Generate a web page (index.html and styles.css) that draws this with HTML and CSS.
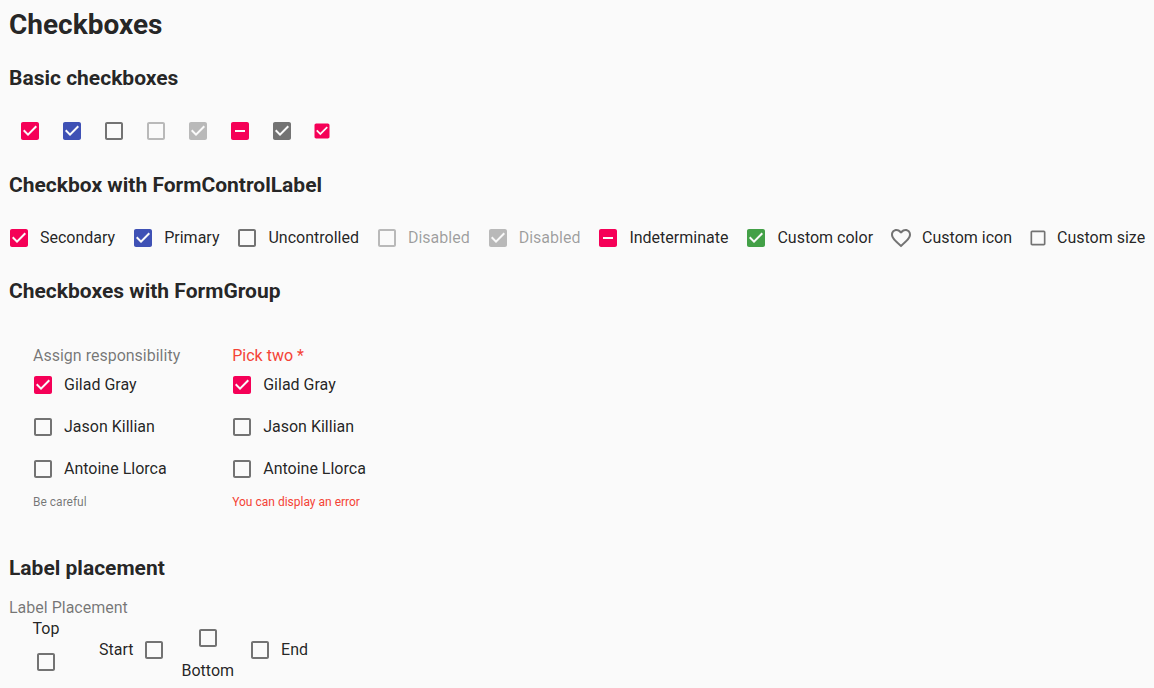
FILE: index.html
```html
<!DOCTYPE html>
<html lang="en">
<head>
<meta charset="utf-8">
<meta name="viewport" content="width=device-width, initial-scale=1">
<title>Checkboxes</title>
<link rel="stylesheet" href="styles.css">
</head>
<body>
<svg class="sprite" aria-hidden="true">
  <symbol id="on" viewBox="0 0 24 24"><path d="M19 3H5c-1.11 0-2 .9-2 2v14c0 1.1.89 2 2 2h14c1.11 0 2-.9 2-2V5c0-1.1-.89-2-2-2zm-9 14l-5-5 1.41-1.41L10 14.17l7.59-7.59L19 8l-9 9z"/></symbol>
  <symbol id="off" viewBox="0 0 24 24"><path d="M19 5v14H5V5h14m0-2H5c-1.1 0-2 .9-2 2v14c0 1.1.9 2 2 2h14c1.1 0 2-.9 2-2V5c0-1.1-.9-2-2-2z"/></symbol>
  <symbol id="mixed" viewBox="0 0 24 24"><path d="M19 3H5c-1.1 0-2 .9-2 2v14c0 1.1.9 2 2 2h14c1.1 0 2-.9 2-2V5c0-1.1-.9-2-2-2zm-2 10H7v-2h10v2z"/></symbol>
  <symbol id="heart" viewBox="0 0 24 24"><path d="M16.5 3c-1.74 0-3.41.81-4.5 2.09C10.91 3.81 9.24 3 7.5 3 4.42 3 2 5.42 2 8.5c0 3.78 3.4 6.86 8.55 11.54L12 21.35l1.45-1.32C18.6 15.36 22 12.28 22 8.5 22 5.42 19.58 3 16.5 3zm-4.4 15.55l-.1.1-.1-.1C7.14 14.24 4 11.39 4 8.5 4 6.5 5.5 5 7.5 5c1.54 0 3.04.99 3.57 2.36h1.87C13.46 5.99 14.96 5 16.5 5c2 0 3.5 1.5 3.5 3.5 0 2.89-3.14 5.74-7.9 10.05z"/></symbol>
</svg>
<main class="page">
  <h1 class="title">Checkboxes</h1>

  <h2 class="heading">Basic checkboxes</h2>
  <div class="basic">
    <span class="check secondary"><input type="checkbox" aria-label="Secondary checkbox" checked><svg><use href="#on"/></svg></span>
    <span class="check primary"><input type="checkbox" aria-label="Primary checkbox" checked><svg><use href="#on"/></svg></span>
    <span class="check"><input type="checkbox" aria-label="Uncontrolled checkbox"><svg><use href="#off"/></svg></span>
    <span class="check disabled"><input type="checkbox" aria-label="Disabled checkbox" disabled><svg><use href="#off"/></svg></span>
    <span class="check disabled"><input type="checkbox" aria-label="Disabled checked checkbox" checked disabled><svg><use href="#on"/></svg></span>
    <span class="check secondary"><input type="checkbox" aria-label="Indeterminate checkbox" checked><svg><use href="#mixed"/></svg></span>
    <span class="check"><input type="checkbox" aria-label="Default color checkbox" checked><svg><use href="#on"/></svg></span>
    <span class="check secondary small"><input type="checkbox" aria-label="Small checkbox" checked><svg><use href="#on"/></svg></span>
  </div>

  <h2 class="heading">Checkbox with FormControlLabel</h2>
  <div class="labelled">
    <label class="field"><span class="check secondary"><input type="checkbox" checked><svg><use href="#on"/></svg></span><span>Secondary</span></label>
    <label class="field"><span class="check primary"><input type="checkbox" checked><svg><use href="#on"/></svg></span><span>Primary</span></label>
    <label class="field"><span class="check"><input type="checkbox"><svg><use href="#off"/></svg></span><span>Uncontrolled</span></label>
    <label class="field muted"><span class="check disabled"><input type="checkbox" disabled><svg><use href="#off"/></svg></span><span>Disabled</span></label>
    <label class="field muted"><span class="check disabled"><input type="checkbox" checked disabled><svg><use href="#on"/></svg></span><span>Disabled</span></label>
    <label class="field"><span class="check secondary"><input type="checkbox" checked><svg><use href="#mixed"/></svg></span><span>Indeterminate</span></label>
    <label class="field"><span class="check green"><input type="checkbox" checked><svg><use href="#on"/></svg></span><span>Custom color</span></label>
    <label class="field"><span class="check"><input type="checkbox"><svg><use href="#heart"/></svg></span><span>Custom icon</span></label>
    <label class="field"><span class="check small"><input type="checkbox"><svg><use href="#off"/></svg></span><span>Custom size</span></label>
  </div>

  <h2 class="heading">Checkboxes with FormGroup</h2>
  <div class="groups">
    <fieldset class="group">
      <legend class="legend">Assign responsibility</legend>
      <div class="options">
        <label class="field"><span class="check secondary"><input type="checkbox" checked><svg><use href="#on"/></svg></span><span>Gilad Gray</span></label>
        <label class="field"><span class="check"><input type="checkbox"><svg><use href="#off"/></svg></span><span>Jason Killian</span></label>
        <label class="field"><span class="check"><input type="checkbox"><svg><use href="#off"/></svg></span><span>Antoine Llorca</span></label>
      </div>
      <p class="helper">Be careful</p>
    </fieldset>
    <fieldset class="group error">
      <legend class="legend">Pick two *</legend>
      <div class="options">
        <label class="field"><span class="check secondary"><input type="checkbox" checked><svg><use href="#on"/></svg></span><span>Gilad Gray</span></label>
        <label class="field"><span class="check"><input type="checkbox"><svg><use href="#off"/></svg></span><span>Jason Killian</span></label>
        <label class="field"><span class="check"><input type="checkbox"><svg><use href="#off"/></svg></span><span>Antoine Llorca</span></label>
      </div>
      <p class="helper">You can display an error</p>
    </fieldset>
  </div>

  <h2 class="heading">Label placement</h2>
  <fieldset class="placement">
    <legend class="legend">Label Placement</legend>
    <div class="places">
      <label class="field top"><span class="check"><input type="checkbox"><svg><use href="#off"/></svg></span><span>Top</span></label>
      <label class="field start"><span class="check"><input type="checkbox"><svg><use href="#off"/></svg></span><span>Start</span></label>
      <label class="field bottom"><span class="check"><input type="checkbox"><svg><use href="#off"/></svg></span><span>Bottom</span></label>
      <label class="field end"><span class="check"><input type="checkbox"><svg><use href="#off"/></svg></span><span>End</span></label>
    </div>
  </fieldset>
</main>
</body>
</html>
```
FILE: styles.css
```css
* { box-sizing: border-box; }

body {
  margin: 0;
  background: #fafafa;
  color: rgba(0, 0, 0, 0.87);
  font: 400 16px/24px Roboto, "Liberation Sans", sans-serif;
}

.sprite { display: none; }

.page { padding: 9px 0 4px 9px; }

.title {
  margin: 0;
  font-size: 28px;
  line-height: 32px;
  font-weight: 700;
}

.heading {
  margin: 20px 0;
  font-size: 21px;
  line-height: 24px;
  font-weight: 700;
}

.title + .heading { margin-top: 25px; }

/* Checkbox control: the native input and its icon share one grid cell */
.check {
  display: inline-grid;
  padding: 9px;
  color: rgba(0, 0, 0, 0.54);
}

.check input,
.check svg {
  grid-area: 1 / 1;
  width: 24px;
  height: 24px;
  margin: 0;
}

.check input {
  appearance: none;
  border-radius: 4px;
  cursor: pointer;
}

.check svg {
  fill: currentColor;
  pointer-events: none;
}

.check.small input,
.check.small svg {
  width: 20px;
  height: 20px;
}

.secondary { color: #f50057; }
.primary { color: #3f51b5; }
.green { color: #43a047; }
.disabled { color: rgba(0, 0, 0, 0.26); }
.muted { color: rgba(0, 0, 0, 0.38); }

.basic {
  display: flex;
  align-items: center;
  padding-bottom: 1px;
}

.field {
  display: inline-flex;
  align-items: center;
  margin-left: -11px;
  white-space: nowrap;
}

.labelled {
  display: flex;
  column-gap: 18px;
}

fieldset {
  min-width: 0;
  margin: 0;
  padding: 0;
  border: 0;
}

.legend {
  padding: 0;
  color: rgba(0, 0, 0, 0.54);
  line-height: 16px;
}

.groups {
  display: flex;
  gap: 52px;
  padding: 25px 24px 24px;
}

.options {
  display: flex;
  flex-direction: column;
  align-items: flex-start;
}

.helper {
  margin: 2px 0 0;
  color: rgba(0, 0, 0, 0.54);
  font-size: 12px;
  line-height: 20px;
}

.error .legend,
.error .helper { color: #f44336; }

.placement { padding-top: 1px; }

.places {
  display: flex;
  align-items: center;
}

.top,
.bottom { margin: 0 16px; }
.top { flex-direction: column-reverse; }
.bottom { flex-direction: column; }
.start {
  flex-direction: row-reverse;
  margin: 0 -10px 0 16px;
}
```
